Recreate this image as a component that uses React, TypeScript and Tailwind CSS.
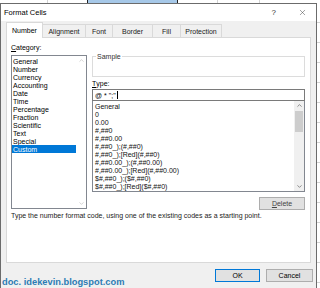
import { ChevronUp, ChevronDown, X } from "lucide-react";

const categories = [
  "General",
  "Number",
  "Currency",
  "Accounting",
  "Date",
  "Time",
  "Percentage",
  "Fraction",
  "Scientific",
  "Text",
  "Special",
  "Custom",
];

const formats = [
  "General",
  "0",
  "0.00",
  "#,##0",
  "#,##0.00",
  "#,##0_);(#,##0)",
  "#,##0_);[Red](#,##0)",
  "#,##0.00_);(#,##0.00)",
  "#,##0.00_);[Red](#,##0.00)",
  "$#,##0_);($#,##0)",
  "$#,##0_);[Red]($#,##0)",
];

const tabs = [
  { name: "Number", w: "w-[37px]" },
  { name: "Alignment", w: "w-[43px]" },
  { name: "Font", w: "w-[27px]" },
  { name: "Border", w: "w-[40px]" },
  { name: "Fill", w: "w-[28px]" },
  { name: "Protection", w: "w-[41px]" },
];

function App() {
  return (
    <div className="w-[320px] h-[288px] overflow-hidden bg-white flex flex-col font-['Liberation_Sans',Arial,sans-serif] text-[7px] text-black leading-none">
      {/* spreadsheet peeking above */}
      <div className="h-[3px] flex shrink-0">
        <div className="w-[48px] border-r border-[#d4d4d4]" />
        <div className="w-[40px] border-r border-[#222]" />
        <div className="w-[90px] bg-[#a6c8e8] border-r border-[#222]" />
        <div className="w-[40px] border-r border-[#d4d4d4]" />
        <div className="w-[42px] border-r border-[#d4d4d4]" />
        <div className="flex-1" />
      </div>

      <div className="flex flex-1 min-h-0">
        {/* dialog */}
        <div className="w-[317px] flex flex-col border-l border-t border-r border-[#6b6b6b] bg-[#f0f0f0]">
          {/* title bar */}
          <div className="h-[17px] bg-white flex items-center pl-[3px] pr-[9px] shrink-0">
            <span className="text-[7.5px] flex-1">Format Cells</span>
            <span className="text-[8px] text-[#333] mr-[22px]">?</span>
            <X size={9} strokeWidth={1.2} className="text-[#333]" />
          </div>

          {/* tabs */}
          <div className="flex items-end pl-[5px] h-[16px] shrink-0">
            {tabs.map((t, i) =>
              i === 0 ? (
                <div
                  key={t.name}
                  className={`${t.w} h-[16px] bg-white border border-b-0 border-[#d9d9d9] flex items-center justify-center relative top-[1px] z-10`}
                >
                  {t.name}
                </div>
              ) : (
                <div
                  key={t.name}
                  className={`${t.w} h-[13px] border border-l-0 border-b-0 border-[#d9d9d9] flex items-center justify-center text-[#222]`}
                >
                  {t.name}
                </div>
              )
            )}
          </div>

          {/* tab panel */}
          <div className="mx-[5px] h-[226px] bg-white border border-[#d9d9d9] flex pl-[4px] pr-[5px] pt-[6px] gap-[5px] shrink-0 relative">
            {/* left column */}
            <div className="w-[76px] flex flex-col">
              <div className="h-[11px]">
                <span className="underline">C</span>ategory:
              </div>
              <div className="h-[154px] border border-[#828790] flex">
                <div className="flex-1 flex flex-col pt-[1px]">
                  {categories.map((c) => (
                    <div
                      key={c}
                      className={
                        c === "Custom"
                          ? "h-[8px] flex items-center pl-[1px] bg-[#0078d7] text-white mr-[1px]"
                          : "h-[8px] flex items-center pl-[1px]"
                      }
                    >
                      {c}
                    </div>
                  ))}
                </div>
                <div className="w-[9px] flex flex-col justify-between items-center py-[1px] text-[#a0a0a0]">
                  <ChevronUp size={7} strokeWidth={1.5} />
                  <ChevronDown size={7} strokeWidth={1.5} />
                </div>
              </div>
            </div>

            {/* right column */}
            <div className="flex-1 flex flex-col pt-[12px]">
              <div className="h-[21px] border border-[#dcdcdc] relative">
                <span className="absolute -top-[4px] left-[3px] bg-white px-[1px] text-[#333]">
                  Sample
                </span>
              </div>
              <div className="h-[12px] flex items-center">
                <span className="underline">T</span>ype:
              </div>
              <div className="h-[12px] border border-[#7a7a7a] flex items-center pl-[2px]">
                @ * &quot;;&quot;
                <span className="w-px h-[8px] bg-black ml-px" />
              </div>
              <div className="h-[91px] border border-[#828790] border-t-0 flex">
                <div className="flex-1 flex flex-col pt-[1px] pl-[2px] overflow-hidden">
                  {formats.map((f) => (
                    <div key={f} className="h-[8px] flex items-center shrink-0 text-[#111]">
                      {f}
                    </div>
                  ))}
                </div>
                <div className="w-[10px] bg-[#f0f0f0] flex flex-col items-center">
                  <ChevronUp size={7} strokeWidth={2.2} className="text-[#555] mt-[1px]" />
                  <div className="w-[8px] h-[21px] bg-[#cdcdcd] mt-[2px]" />
                  <div className="flex-1" />
                  <ChevronDown size={7} strokeWidth={2.2} className="text-[#555] mb-[1px]" />
                </div>
              </div>
              <div className="flex justify-end mt-[5px]">
                <div className="w-[46px] h-[13px] bg-[#e1e1e1] border border-[#adadad] flex items-center justify-center text-[#444]">
                  <span className="underline">D</span>elete
                </div>
              </div>
            </div>

            <div className="absolute left-[4px] top-[174px] text-[#222] whitespace-nowrap">
              Type the number format code, using one of the existing codes as a starting point.
            </div>
          </div>

          {/* footer */}
          <div className="flex justify-end items-start pt-[6px] pr-[3px] gap-[6px] relative flex-1">
            <div className="w-[45px] h-[13px] bg-[#e1e1e1] border border-[#0078d7] flex items-center justify-center">
              OK
            </div>
            <div className="w-[47px] h-[13px] bg-[#e1e1e1] border border-[#adadad] flex items-center justify-center">
              Cancel
            </div>
            <div className="absolute left-[1px] bottom-[1px] text-[9.3px] font-bold text-[#2c7cb4]">
              doc. idekevin.blogspot.com
            </div>
          </div>
        </div>

        {/* spreadsheet on the right */}
        <div className="flex-1 bg-[repeating-linear-gradient(to_bottom,#ffffff_0px,#ffffff_19px,#d4d4d4_19px,#d4d4d4_20px)]" />
      </div>
    </div>
  );
}

export default App;
